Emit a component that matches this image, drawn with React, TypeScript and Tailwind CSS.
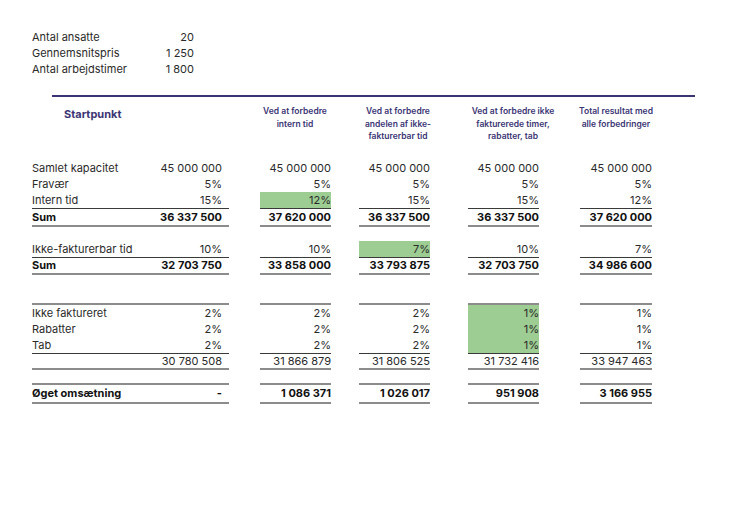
import React from 'react';

type Cell = { v: string; green?: boolean };

// column widths + left spacing for the four comparison columns
const colCls = [
  'ml-[31px] w-[71px]',
  'ml-[28px] w-[71px]',
  'ml-[38px] w-[71px]',
  'ml-[41px] w-[72px]',
];

function Row({
  label,
  value,
  cells,
  bold,
  top,
  bottom,
  topThick,
  h = 'h-[16px]',
}: {
  label: string;
  value: string;
  cells: Cell[];
  bold?: boolean;
  top?: boolean;
  bottom?: boolean;
  topThick?: boolean;
  h?: string;
}) {
  const border = [
    top ? 'border-t border-t-[#3a3a3a]' : '',
    topThick ? 'border-t-2 border-t-[#8c8c8c]' : '',
    bottom ? 'border-b-2 border-b-[#8c8c8c]' : '',
  ].join(' ');
  const weight = bold ? 'font-bold text-[#111]' : 'text-[#2a2a2a]';
  return (
    <div className={`flex ${weight}`}>
      <div className={`w-[197px] ${h} ${border} flex items-center justify-between pr-[7px]`}>
        <span>{label}</span>
        <span>{value}</span>
      </div>
      {cells.map((c, i) => (
        <div
          key={i}
          className={`${colCls[i]} ${h} ${border} flex items-center justify-end ${c.green ? 'bg-[#9dcd92]' : ''}`}
        >
          {c.v}
        </div>
      ))}
    </div>
  );
}

const c = (...vals: string[]): Cell[] => vals.map((v) => ({ v }));

export default function App() {
  return (
    <div
      className="w-[750px] h-[530px] bg-white text-[11px] leading-none text-[#2a2a2a]"
      style={{ fontFamily: 'Inter, "Noto Sans", sans-serif' }}
    >
      {/* Inputs */}
      <div className="pt-[31px] pl-[32px] w-[194px] flex flex-col gap-[3px] leading-[13px]">
        <div className="flex justify-between">
          <span>Antal ansatte</span>
          <span>20</span>
        </div>
        <div className="flex justify-between">
          <span>Gennemsnitspris</span>
          <span>1 250</span>
        </div>
        <div className="flex justify-between">
          <span>Antal arbejdstimer</span>
          <span>1 800</span>
        </div>
      </div>

      {/* Header */}
      <div className="ml-[52px] mt-[19px] w-[643px] h-[2px] bg-[#3b3574]" />
      <div className="flex text-[#3b3574] font-semibold text-[8.5px] leading-[12.7px] mt-[8px] h-[55px]">
        <div className="w-[250px] pl-[64px] pt-[3px] text-[11px] font-bold leading-[13px]">Startpunkt</div>
        <div className="w-[90px] text-center">Ved at forbedre<br />intern tid</div>
        <div className="ml-[17px] w-[82px] text-center">
          Ved at forbedre<br />andelen af ikke-<br />fakturerbar tid
        </div>
        <div className="ml-[27px] w-[94px] text-center">
          Ved at forbedre ikke<br />fakturerede timer,<br />rabatter, tab
        </div>
        <div className="ml-[11px] w-[90px] text-center">
          Total resultat med<br />alle forbedringer
        </div>
      </div>

      {/* Table */}
      <div className="pl-[32px]">
        <Row label="Samlet kapacitet" value="45 000 000" cells={c('45 000 000', '45 000 000', '45 000 000', '45 000 000')} />
        <Row label="Fravær" value="5%" cells={c('5%', '5%', '5%', '5%')} />
        <Row
          label="Intern tid"
          value="15%"
          cells={[{ v: '12%', green: true }, { v: '15%' }, { v: '15%' }, { v: '12%' }]}
        />
        <Row bold top bottom h="h-[19px]" label="Sum" value="36 337 500" cells={c('37 620 000', '36 337 500', '36 337 500', '37 620 000')} />

        <div className="h-[14px]" />
        <Row
          label="Ikke-fakturerbar tid"
          value="10%"
          cells={[{ v: '10%' }, { v: '7%', green: true }, { v: '10%' }, { v: '7%' }]}
        />
        <Row bold top bottom h="h-[18px]" label="Sum" value="32 703 750" cells={c('33 858 000', '33 793 875', '32 703 750', '34 986 600')} />

        <div className="h-[28px]" />
        <Row
          topThick
          h="h-[18px]"
          label="Ikke faktureret"
          value="2%"
          cells={[{ v: '2%' }, { v: '2%' }, { v: '1%', green: true }, { v: '1%' }]}
        />
        <Row label="Rabatter" value="2%" cells={[{ v: '2%' }, { v: '2%' }, { v: '1%', green: true }, { v: '1%' }]} />
        <Row label="Tab" value="2%" cells={[{ v: '2%' }, { v: '2%' }, { v: '1%', green: true }, { v: '1%' }]} />
        <Row top bottom h="h-[17px]" label="" value="30 780 508" cells={c('31 866 879', '31 806 525', '31 732 416', '33 947 463')} />

        <div className="h-[13px]" />
        <Row bold topThick bottom h="h-[21px]" label="Øget omsætning" value="-" cells={c('1 086 371', '1 026 017', '951 908', '3 166 955')} />
      </div>
    </div>
  );
}
